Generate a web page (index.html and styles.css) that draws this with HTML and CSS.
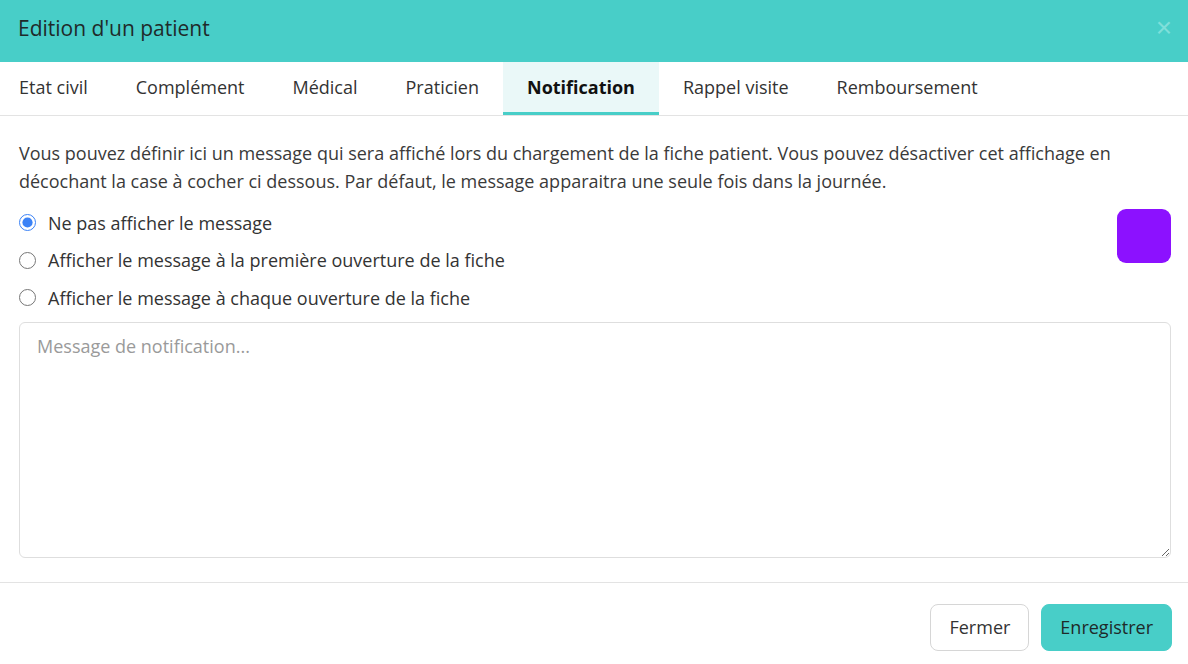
FILE: index.html
```html
<!DOCTYPE html>
<html lang="fr">
<head>
  <meta charset="UTF-8">
  <meta name="viewport" content="width=device-width, initial-scale=1.0">
  <title>Edition d'un patient</title>
  <link rel="stylesheet" href="styles.css">
</head>
<body>
  <div class="modal">
    <div class="modal-header">
      <h1>Edition d'un patient</h1>
      <button class="close" aria-label="Fermer">&times;</button>
    </div>

    <ul class="tabs">
      <li>Etat civil</li>
      <li>Complément</li>
      <li>Médical</li>
      <li>Praticien</li>
      <li class="active">Notification</li>
      <li>Rappel visite</li>
      <li>Remboursement</li>
    </ul>

    <div class="modal-body">
      <p class="intro">Vous pouvez définir ici un message qui sera affiché lors du chargement de la fiche patient. Vous pouvez désactiver cet affichage en décochant la case à cocher ci dessous. Par défaut, le message apparaitra une seule fois dans la journée.</p>

      <div class="options">
        <div class="radios">
          <label><input type="radio" name="notif" checked> Ne pas afficher le message</label>
          <label><input type="radio" name="notif"> Afficher le message à la première ouverture de la fiche</label>
          <label><input type="radio" name="notif"> Afficher le message à chaque ouverture de la fiche</label>
        </div>
        <div class="color-pick"></div>
      </div>

      <textarea placeholder="Message de notification..."></textarea>
    </div>

    <div class="modal-footer">
      <button class="btn">Fermer</button>
      <button class="btn btn-primary">Enregistrer</button>
    </div>
  </div>
</body>
</html>
```

FILE: styles.css
```css
/* Général */
body {
  margin: 0;
  font-family: 'Open Sans', 'Noto Sans', sans-serif;
  color: #333;
  background: #fff;
}
/* En-tête */
.modal-header {
  height: 62px;
  box-sizing: border-box;
  background: #48cec8;
  display: flex;
  align-items: center;
  justify-content: space-between;
  padding: 0 16px 6px 18px;
}
.modal-header h1 {
  margin: 0;
  font-size: 21px;
  font-weight: 400;
  color: #1f2a2a;
}
.close {
  background: none;
  border: none;
  font-size: 28px;
  line-height: 1;
  color: #7fdfda;
  cursor: pointer;
  padding: 0;
}
/* Onglets */
.tabs {
  list-style: none;
  margin: 0;
  padding: 0;
  display: flex;
  border-bottom: 1px solid #e3e3e3;
}
.tabs li {
  height: 50px;
  padding: 0 24px;
  display: flex;
  align-items: center;
  font-size: 18px;
  color: #333;
  border-bottom: 3px solid transparent;
  cursor: pointer;
}
.tabs li:first-child {
  padding-left: 19px;
}
.tabs li.active {
  background: #eaf8f8;
  border-bottom-color: #48cec8;
  font-weight: 700;
  color: #111;
}
/* Corps */
.modal-body {
  padding: 23px 17px 24px 19px;
  border-bottom: 1px solid #e3e3e3;
}
.intro {
  margin: 0 0 9px;
  font-size: 18px;
  line-height: 28px;
  color: #3a3a3a;
}
.options {
  display: flex;
  justify-content: space-between;
  align-items: flex-start;
}
.radios label {
  display: flex;
  align-items: center;
  height: 37.5px;
  font-size: 18px;
  color: #333;
}
.radios input {
  width: 17px;
  height: 17px;
  margin: 0 12px 0 0;
  accent-color: #3b82f6;
}
.color-pick {
  width: 54px;
  height: 54px;
  border-radius: 9px;
  background: #8c11ff;
  margin-top: 5px;
}
textarea {
  display: block;
  box-sizing: border-box;
  width: 100%;
  height: 236px;
  margin-top: 5px;
  padding: 11px 17px;
  border: 1px solid #dedede;
  border-radius: 6px;
  font-family: inherit;
  font-size: 18px;
  color: #333;
}
textarea::placeholder {
  color: #9a9a9a;
}
/* Pied */
.modal-footer {
  display: flex;
  justify-content: flex-end;
  gap: 12px;
  padding: 21px 16px 0;
}
.btn {
  height: 47px;
  padding: 0 18px;
  font-family: inherit;
  font-size: 18px;
  color: #333;
  background: #fff;
  border: 1px solid #d6d6d6;
  border-radius: 8px;
  cursor: pointer;
}
.btn-primary {
  background: #48cec8;
  border-color: #48cec8;
  color: #1f2a2a;
}
```
